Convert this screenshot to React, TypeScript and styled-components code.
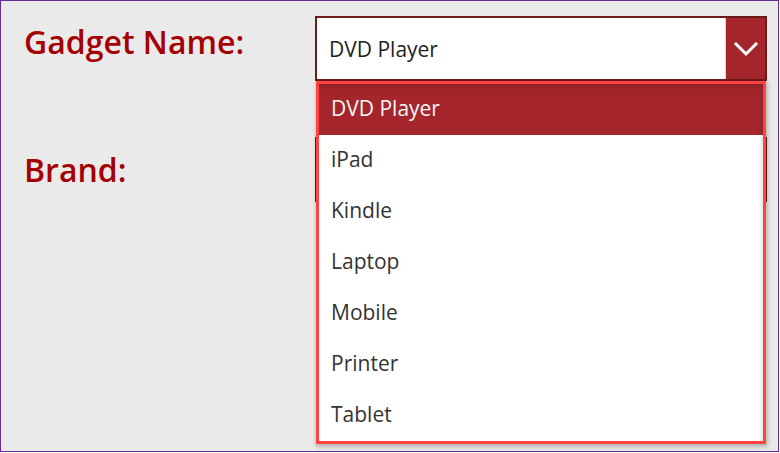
import React from "react";
import styled, { createGlobalStyle } from "styled-components";

const Global = createGlobalStyle`
  html, body { margin: 0; padding: 0; background: #ffffff; }
  body { font-family: "Open Sans", "Liberation Sans", sans-serif; }
  * { box-sizing: border-box; }
`;

const Frame = styled.div`
  position: relative;
  width: 779px;
  height: 452px;
  border: 1px solid #6b2a93;
  background: #eaeaea;
  padding: 15px 0 0 23px;
  overflow: hidden;
`;

const Form = styled.div`
  display: grid;
  grid-template-columns: 291px 452px;
  grid-auto-rows: 65px;
  row-gap: 56px;
`;

const Label = styled.div<{ $top: number }>`
  padding-top: ${(p) => p.$top}px;
  font-family: "Open Sans", "Liberation Sans", sans-serif;
  font-weight: 600;
  font-size: 32px;
  line-height: 41px;
  color: #a50000;
  white-space: nowrap;
`;

const Select = styled.div`
  position: relative;
  display: flex;
  height: 65px;
  border: 2px solid #6a1b1b;
  background: #ffffff;
`;

const Value = styled.div`
  flex: 1;
  display: flex;
  align-items: center;
  padding-left: 12px;
  font-size: 21px;
  color: #222222;
`;

const Chevron = styled.div`
  width: 40px;
  display: flex;
  align-items: center;
  justify-content: center;
  background: #a4262c;
  border-left: 1px solid #d8d8d8;
`;

const Menu = styled.ul`
  position: absolute;
  top: 63px;
  left: -1px;
  width: 450px;
  height: 363px;
  margin: 0;
  padding: 0;
  list-style: none;
  background: #ffffff;
  border: 3px solid #ff4343;
  box-shadow: 1px 2px 4px 1px rgba(0, 0, 0, 0.22);
  z-index: 2;
  &::after {
    content: "";
    position: absolute;
    inset: 0;
    pointer-events: none;
    box-shadow: inset -2px 4px 4px -1px rgba(0, 0, 0, 0.16);
  }
`;

const Item = styled.li<{ $selected?: boolean }>`
  height: 51px;
  display: flex;
  align-items: center;
  padding: 0 0 4px 12px;
  font-size: 21px;
  color: ${(p) => (p.$selected ? "#f6f6f6" : "#333333")};
  background: ${(p) => (p.$selected ? "#a4262c" : "transparent")};
`;

const items = ["DVD Player", "iPad", "Kindle", "Laptop", "Mobile", "Printer", "Tablet"];

export default function App() {
  return (
    <>
      <Global />
      <Frame>
        <Form>
          <Label $top={5}>Gadget Name:</Label>
          <Select>
            <Value>DVD Player</Value>
            <Chevron>
              <svg width="26" height="16" viewBox="0 0 26 16">
                <polyline
                  points="2,2 13,13 24,2"
                  fill="none"
                  stroke="#ffffff"
                  strokeWidth="3"
                />
              </svg>
            </Chevron>
            <Menu>
              {items.map((it, i) => (
                <Item key={it} $selected={i === 0}>
                  {it}
                </Item>
              ))}
            </Menu>
          </Select>
          <Label $top={12}>Brand:</Label>
          <Select>
            <Value />
            <Chevron />
          </Select>
        </Form>
      </Frame>
    </>
  );
}
